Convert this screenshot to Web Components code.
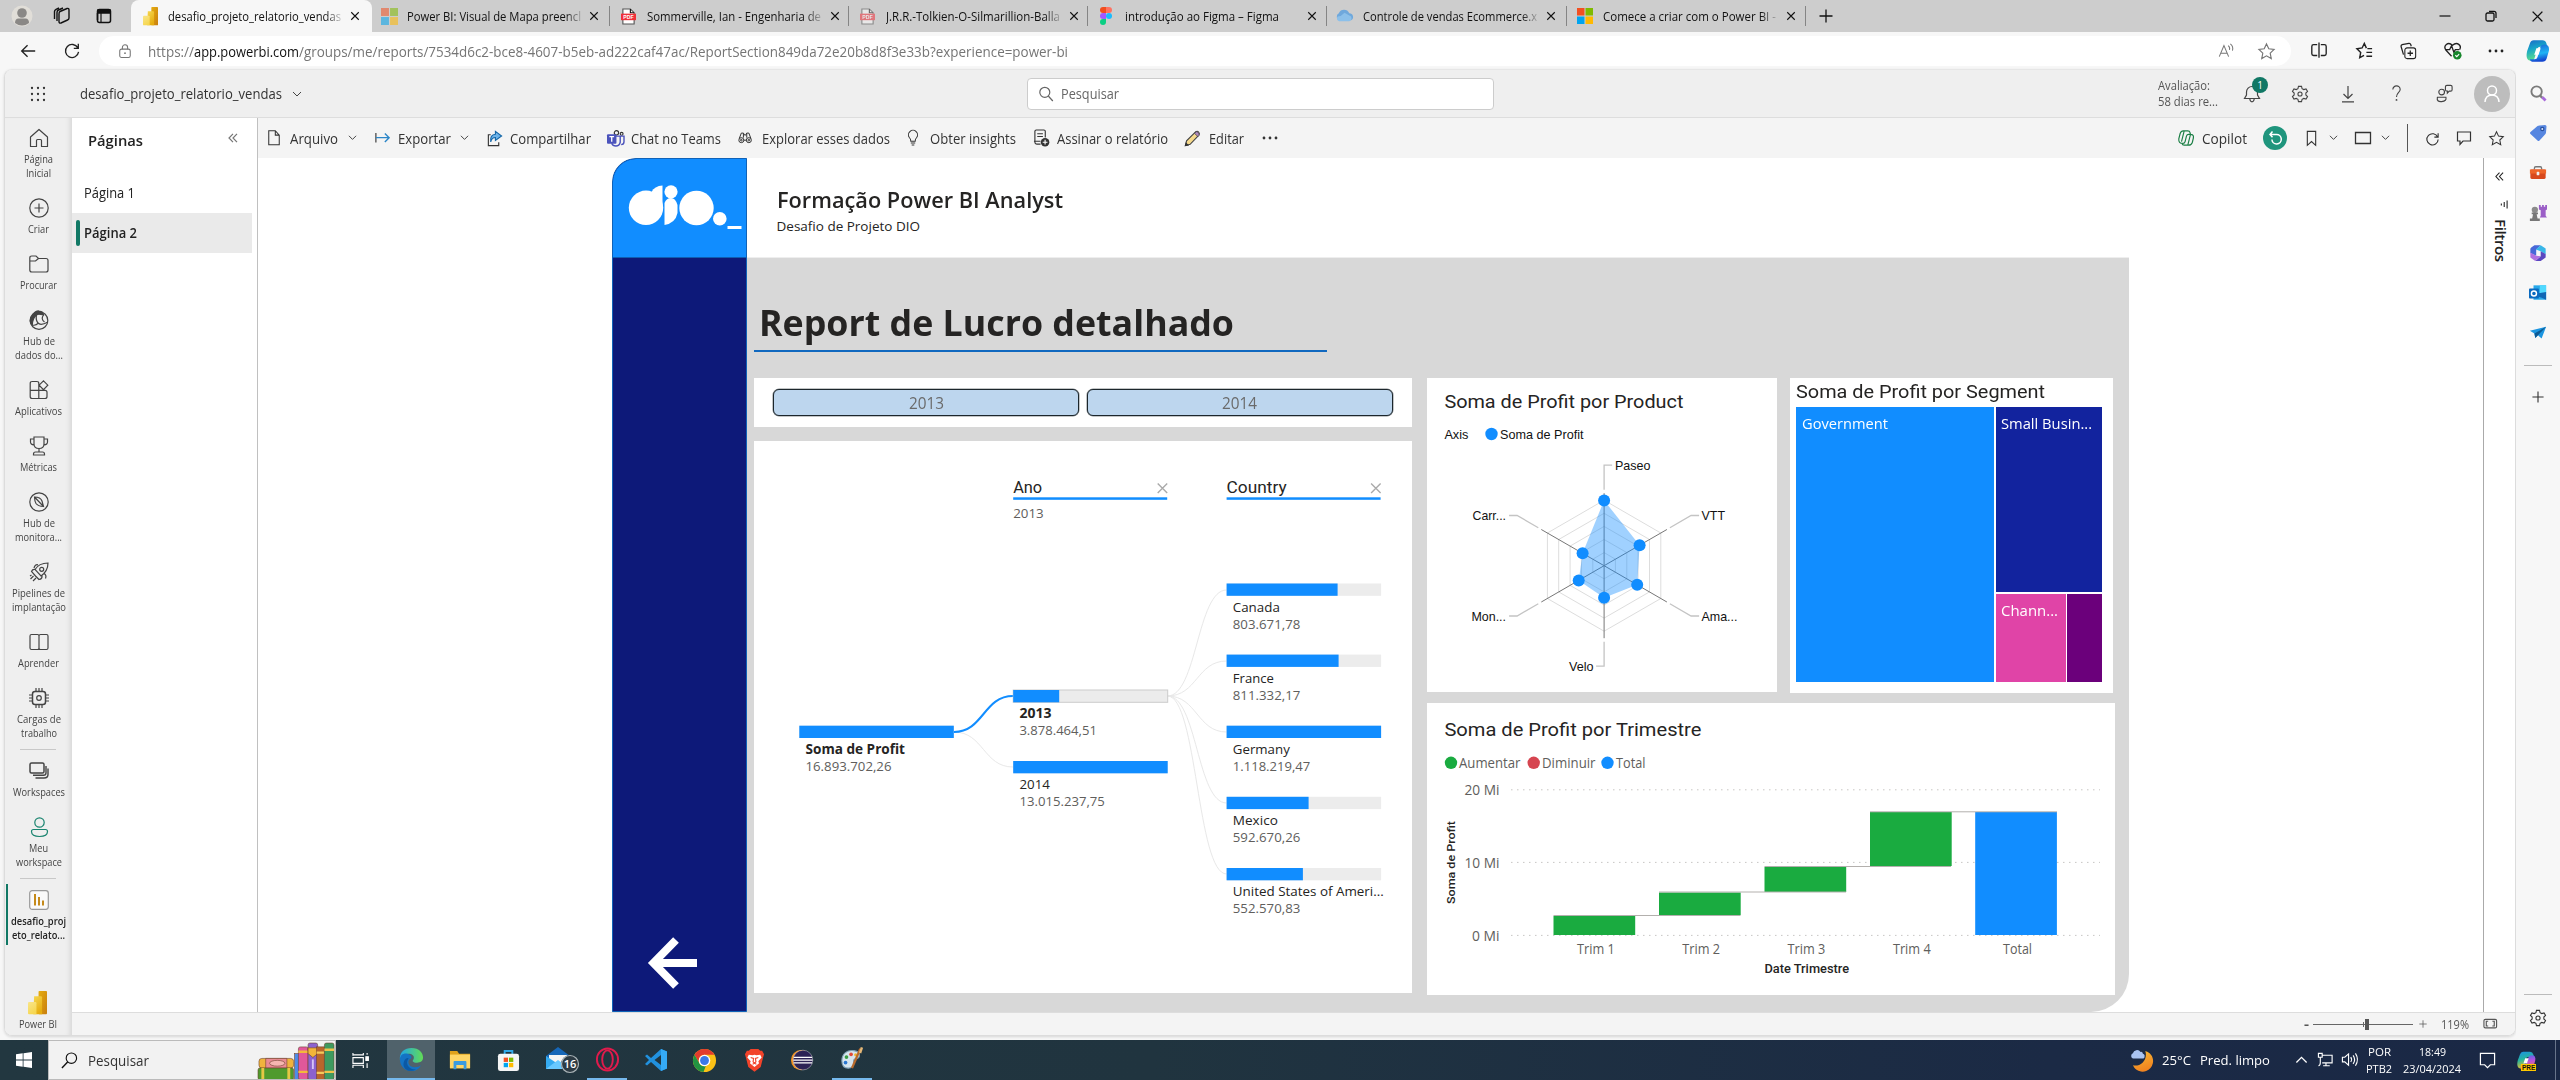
<!DOCTYPE html>
<html lang="pt-BR">
<head>
<meta charset="utf-8">
<title>desafio_projeto_relatorio_vendas</title>
<style>
html,body{margin:0;height:100%;overflow:hidden}
body{font-family:"Open Sans","Noto Sans",sans-serif;color:#333;background:#f7f7f7}
</style>
</head>
<body>
<desktop-shell></desktop-shell>
<script>
const define = (name, css, html, after) => customElements.define(name, class extends HTMLElement {
  connectedCallback() {
    if (this.shadowRoot) return;
    const root = this.attachShadow({ mode: "open" });
    root.innerHTML = `<style>*{box-sizing:border-box}:host{display:block;box-sizing:border-box}${css}</style>` + (typeof html === "function" ? html(this) : html);
    if (after) after(this, root);
  }
});

/* Icon set: [viewBox width, viewBox height, markup] */
const pdf = '<path d="M2 1h8l4 4v12H2z" fill="#fff" stroke="#555"/><path d="M10 1v4h4"/><path d="M0 6h16v7H0z" fill="#f0303a" stroke="none"/><text x="8" y="12" font-size="5.5" font-weight="700" fill="#fff" stroke="none" text-anchor="middle" font-family="Liberation Sans">PDF</text>';
const starPath = 'M10 2l2.4 5.2 5.6.7-4.1 3.9 1.1 5.6-5-2.8-5 2.8 1.1-5.6L2 7.900l5.600-.7z';
const gear = '<path d="M8.300 1.500h3.400l.6 2.500 1.900 1.100 2.500-.8 1.700 2.900-1.900 1.800v2l1.900 1.800-1.700 2.900-2.500-.8-1.900 1.100-.6 2.500H8.300L7.700 16l-1.900-1.100-2.500.8-1.700-2.900L3.500 11V9L1.600 7.200l1.700-2.900 2.500.8L7.700 4z"/><circle cx="10" cy="10" r="2.300"/>';
const copilot = '<path d="M8 2h8q3 0 3.800 3l.7 3H14q-2 0-2.600 2L9 18q-.7 3-3.500 3C1 21 1 16 2 12L4.500 5Q5.500 2 8 2z" fill="url(#cpa)" stroke="none"/><path d="M16 22H8q-3 0-3.500-2.500H9q2 0 2.600-2L14 9q.7-3 4-3 5 0 4 6l-2 7q-1 3-4 3z" fill="url(#cpb)" stroke="none"/><path d="M10.500 9.500h4l-2 6h-4z" fill="#fff" stroke="none"/>';
const I = {
  x:[12,12,'<path d="M1.500 1.500l9 9M10.500 1.500l-9 9" stroke-width="1.300"/>'],
  plus:[14,14,'<path d="M7 .5v13M.5 7h13" stroke-width="1.300"/>'],
  profile:[22,22,'<circle cx="11" cy="11" r="10.500" fill="#e1ded8" stroke="none"/><circle cx="11" cy="8" r="4.800" fill="#8a8886" stroke="none"/><path d="M4 18q0-4.500 3.500-4.500h7q3.500 0 3.500 4.500-7 5-14 0z" fill="#8a8886" stroke="none"/>'],
  spaces:[18,18,'<path d="M7 4.500l7-3q2-.5 2 1.500v8q0 1.500-1.500 2L8 16q-2 .5-2-1.500V7q0-2 1-2.500zM4 14V5.500q0-2 1.500-2.500L10 1M1.500 12V4.500Q1.500 3 3 2.300L6 1" stroke-width="1.400"/>'],
  tabs:[16,16,'<rect x="1.500" y="1.500" width="13" height="13" rx="2" stroke-width="1.500"/><path d="M2 2h12v3H2zM1.500 5v7" fill="#111" stroke-width="1.500"/><path d="M5 5v9.500"/>'],
  pbi:[18,22,'<defs><linearGradient id="pa" x2="1" y2="1"><stop stop-color="#e6ad10"/><stop offset="1" stop-color="#c87e0e"/></linearGradient><linearGradient id="pb" x2=".5" y2="1"><stop stop-color="#f6d751"/><stop offset="1" stop-color="#e6ad10"/></linearGradient><linearGradient id="pc" x2=".5" y2="1"><stop stop-color="#f9e589"/><stop offset="1" stop-color="#f6d751"/></linearGradient></defs><g stroke="none"><rect x="10" width="8" height="22" rx=".8" fill="url(#pa)"/><path d="M5.800 5h6.500q1 0 1 1v16H5z" fill="url(#pb)"/><path d="M1 10.500h6q1 0 1 1V22H1q-1 0-1-1v-9.500q0-1 1-1z" fill="url(#pc)"/></g>'],
  ms:[16,16,'<g stroke="none"><path fill="#f25022" d="M0 0h7.500v7.500H0z"/><path fill="#7fba00" d="M8.500 0H16v7.500H8.500z"/><path fill="#00a4ef" d="M0 8.500h7.500V16H0z"/><path fill="#ffb900" d="M8.500 8.500H16V16H8.500z"/></g>'],
  pdf:[16,18,pdf],
  figma:[12,18,'<g stroke="none"><path fill="#f24e1e" d="M3 0h3v6H3a3 3 0 010-6z"/><path fill="#ff7262" d="M6 0h3a3 3 0 010 6H6z"/><path fill="#a259ff" d="M3 6h3v6H3a3 3 0 010-6z"/><circle cx="9" cy="9" r="3" fill="#1abcfe"/><path fill="#0acf83" d="M3 12h3v3a3 3 0 11-3-3z"/></g>'],
  cloud:[18,14,'<g stroke="none"><path fill="#6fa8dc" d="M4 12a4 4 0 01-1-7.500A6 6 0 0114 4.500 4 4 0 0116 12z"/><path fill="#8cc0ea" d="M5 13q-4 0-4-3 0-2.500 4-2.500L9 4l7 4q1.500 4-2 5z"/></g>'],
  min:[14,14,'<path d="M1.500 7h11"/>'],
  max:[14,14,'<rect x="2" y="4" width="8" height="8" rx="1.500" stroke-width="1.300"/><path d="M5 2.300h5q2 0 2 2V9" stroke-width="1.300"/>'],
  back:[20,20,'<path d="M18 10H3M9.500 3.500L3 10l6.500 6.500" stroke-width="1.500"/>'],
  reload:[20,20,'<path d="M16.500 6.500A7.300 7.300 0 1017.300 11M17 2v5h-5" stroke-width="1.500"/>'],
  lock:[16,18,'<rect x="2" y="7" width="12" height="9.500" rx="2"/><path d="M5 7V5a3 3 0 016 0v2"/><circle cx="8" cy="11.700" r="1" fill="currentColor" stroke="none"/>'],
  read:[20,18,'<path d="M1.500 16L7 3l5.500 13M3.500 12h7M12 3q2.500 2 1.500 5M14.500 1q4 3 2.500 8" />'],
  star:[20,20,`<path d="${starPath}"/>`],
  split:[20,18,'<path d="M8 3H4Q2 3 2 5v8q0 2 2 2h4M12 3h4q2 0 2 2v8q0 2-2 2h-4M10 .5v17" stroke-width="1.500"/>'],
  favs:[20,20,'<path d="M12 7.500L9.800 2.500 7.500 7.300l-5.500.8 4 4-1 5.500 4.500-2.400M13 8h5M12 12h6M12 16h6" stroke-width="1.500"/>'],
  coll:[20,20,'<rect x="6.500" y="6.500" width="12" height="12" rx="2.500"/><path d="M12.500 9.500v6M9.500 12.500h6M5 14L2.300 5Q2 3.500 3.500 3L11 1.500q1.500-.3 2 1.200l.6 2" stroke-width="1.400"/>'],
  heart:[20,20,'<path d="M9 16L3 9.500C0 5.500 5 0 10 4.500 15 0 20 5 17.500 9M2.500 9H7l2-4 2.500 7 1.500-3h4" stroke-width="1.400"/><circle cx="15" cy="15" r="4.500" fill="#16862b" stroke="none"/><path d="M13 15l1.500 1.500L17 13.800" stroke="#fff"/>'],
  dots:[18,6,'<g fill="currentColor" stroke="none"><circle cx="3" cy="3" r="1.400"/><circle cx="9" cy="3" r="1.400"/><circle cx="15" cy="3" r="1.400"/></g>'],
  copilot:[24,24,'<defs><linearGradient id="cpa" x2=".3" y2="1"><stop stop-color="#1b68c8"/><stop offset=".45" stop-color="#17a5c8"/><stop offset="1" stop-color="#5fe08a"/></linearGradient><linearGradient id="cpb" x2=".2" y2="1"><stop stop-color="#1b5fd0"/><stop offset=".6" stop-color="#1fb5f5"/><stop offset="1" stop-color="#1447d0"/></linearGradient></defs>'+copilot],
  copilotP:[24,24,'<defs><linearGradient id="cpa" x2=".3" y2="1"><stop stop-color="#1b8fe8"/><stop offset=".5" stop-color="#25b5a0"/><stop offset="1" stop-color="#e8c12c"/></linearGradient><linearGradient id="cpb" x2=".2" y2="1"><stop stop-color="#3f6ce8"/><stop offset=".5" stop-color="#b853dd"/><stop offset="1" stop-color="#f07a62"/></linearGradient></defs>'+copilot],
  copilotG:[20,20,'<path d="M7 2h5q2 0 2.500 2l.5 2h-2Q11 6 10.500 8L9 14q-.5 2-2.500 2Q1.500 16 2 11l1.500-6Q4.500 2 7 2zM13 18H8q-2 0-2.500-2M13 18q3 0 4-3l1.200-5Q19 6 15 6M8 2L5 14M12 18l3-12" stroke="#1b7f45" stroke-width="1.300"/>'],
  waffle:[16,16,'<g fill="#333" stroke="none">'+[2,8,14].map(y=>[2,8,14].map(x=>`<circle cx="${x}" cy="${y}" r="1.150"/>`).join("")).join("")+'</g>'],
  chev:[10,8,'<path d="M1 2l4 4 4-4" stroke-width="1"/>'],
  search:[16,16,'<circle cx="6.800" cy="6.300" r="5"/><path d="M10.300 10l4.500 5"/>'],
  bell:[20,20,'<path d="M2.500 14.500h15L15.500 11V8a5.500 5.500 0 00-11 0v3zM7.800 15q.5 2.800 2.200 2.800t2.200-2.800"/>'],
  gear:[20,20,gear],
  down:[16,18,'<path d="M8 1v12.500M3.500 9L8 13.500 12.500 9M2 16.800h12"/>'],
  help:[12,18,'<path d="M2 5a4 4 0 018 0c0 3-4 3.500-4 8"/><circle cx="6" cy="16.300" r="1" fill="currentColor" stroke="none"/>'],
  people:[20,20,'<circle cx="7" cy="8.500" r="3"/><path d="M2.500 14h9q1 4-4.500 4.500T2.500 14zM11 3q0-1.500 1.500-1.500h4Q18 1.500 18 3v3q0 1.500-1.500 1.500H15l-2 2v-2q-2 0-2-1.500z"/>'],
  avatar:[36,36,'<circle cx="18" cy="18" r="18" fill="#bdbdbd" stroke="none"/><g stroke="#fff" stroke-width="1.500"><circle cx="18" cy="14.500" r="4.500"/><path d="M11 26q.5-7 7-7t7 7"/></g>'],
  file:[16,20,'<path d="M2 2h7.500l4.500 5v11H2zM9.500 2v5H14"/>'],
  exp:[18,12,'<path d="M2 1v10"/><path d="M2 6h14M11.500 1.500L16 6l-4.500 4.500" stroke="#2c86c8" stroke-width="1.500"/>'],
  share:[18,18,'<path d="M5 5H2.500v11.500h11V13"/><path d="M10 1.500l6.500 4.800L10 11V8q-4 0-5 4.500Q4 5 10 4.500z" fill="#6cb2e8" stroke="#1567a8"/>'],
  teams:[18,18,'<circle cx="10" cy="3" r="2.300"/><circle cx="15.500" cy="4" r="1.500" /><path d="M9 6.500h9v6q0 3-3 3M5 14q1 3 4.500 3t4.500-4V6.500" stroke="#4b53bc" stroke-width="1.500"/><rect y="4.500" width="10" height="10" rx="1" fill="#4b53bc" stroke="none"/><path d="M2.500 7h5M5 7v5.500" stroke="#fff" stroke-width="1.400"/>'],
  bino:[18,16,'<circle cx="4" cy="11" r="3"/><circle cx="13" cy="11" r="3"/><circle cx="4" cy="11" r="1"/><circle cx="13" cy="11" r="1"/><path d="M1.500 9L4 2.500h2.500L8 5h1l1.500-2.500H13L15.500 9M7 11h3M6.500 3v5M10.500 3v5"/>'],
  bulb:[16,20,'<path d="M5.500 14q0-2.500-1.500-4a5.200 5.200 0 118 0q-1.500 1.500-1.500 4zM5.500 16h5M6.500 18.300h3"/>'],
  subs:[18,20,'<path d="M13 9V2.500Q13 1 11.500 1h-8Q2 1 2 2.500V14q0 2 2 2h4M4.500 5h6M4.500 8h6M1 13h7"/><circle cx="12.800" cy="14" r="4.500" fill="#333" stroke="none"/><path d="M12.800 11.500v5M10.300 14h5" stroke="#fff"/>'],
  pencil:[18,18,'<path d="M1.500 16.500l1.200-5L12 2.200q2-1.500 3.500 0t0 3.500L6.500 15.200z" fill="#f6d98b" stroke="#444"/><path d="M11 3.500l3.800 3.500L16 5.500q.8-3-2.500-3.800z" fill="#b08ac0" stroke="#444" stroke-width=".8"/><path d="M1.500 16.500l.7-2.500 2 2z" fill="#444"/>'],
  undo:[24,24,'<circle cx="12" cy="12" r="12" fill="#1f957d" stroke="none"/><path d="M7.500 8.500h6a4.700 4.700 0 11-4.600 5M9.500 5.500l-2.500 3 2.500 2.800" stroke="#fff" stroke-width="1.500"/>'],
  mark:[14,18,'<path d="M2.500 1.500h9v15L7 12.500l-4.500 4z"/>'],
  rect:[18,14,'<path d="M1.500 1.500h15v11h-15z" stroke-width="1.300"/>'],
  refresh:[16,16,'<path d="M13.500 6.500A6 6 0 1014 9M14 2.500v4h-4"/>'],
  comment:[16,16,'<path d="M1.500 2h13v9H7l-3 3.500V11H1.500z"/>'],
  dbl:[10,10,'<path d="M5 .8L1 5l4 4.200M9 .8L5 5l4 4.200"/>'],
  filter:[10,10,'<path d="M9 .5v9M5.800 2.200v5.600M2.600 3.800v2.400" stroke-width="1.200"/>'],
  home:[20,20,'<path d="M1.500 9L10 1.500 18.500 9v9.500H12.500v-6q0-1-1-1h-3q-1 0-1 1v6H1.500z" stroke-linejoin="round"/>'],
  create:[20,20,'<circle cx="10" cy="10" r="9.200"/><path d="M10 5.500v9M5.500 10h9"/>'],
  folder:[20,20,'<path d="M.8 4q0-2 2-2H7l2.500 2.500H17q2 0 2 2V16q0 2-2 2H2.800q-2 0-2-2zM.8 7H6.500L9.500 4.500"/>'],
  hub:[20,20,'<circle cx="10" cy="10.500" r="8.800"/><path d="M2 8Q6 0 10 1q4 .3 4.500 4Q9 3.500 7.500 5q-4 3-4.200 10Q0 12 2 8z" fill="#444"/><path d="M7.500 5q-1 5 1.500 8t10-1M14.500 5q-3 4 1 7M3.500 15q3 1 6-2"/>'],
  apps:[20,20,'<path d="M9.800 10.300V3.500q0-2-2-2H3.200q-2 0-2 2v13q0 2 2 2H16q2 0 2-2v-4.200q0-2-2-2H1.200M9.800 10.300v8.200M14.500.8l4.300 4.400-4.300 4.400-4.400-4.400z"/>'],
  trophy:[20,20,'<path d="M5 1h10v7q0 4.500-5 4.500T5 8zM5 3H1.500v3q0 2.500 3.500 3M15 3h3.500v3q0 2.500-3.500 3M10 12.500V16M4.500 19v-1q0-2 2-2h7q2 0 2 2v1z"/>'],
  compass:[20,20,'<circle cx="10" cy="10" r="9.200"/><path d="M5.500 5q6 0 7.500 4 .5 2 1.500 5.500-5.500-.3-7.500-3Q5.700 9.500 5.500 5zM5.500 5l9 9.500"/>'],
  rocket:[20,20,'<path d="M6 7.500Q10 1 19 1q0 8-7 13zM6 7.500q-2.500-.5-3.500 2l4 4.500 3.500 3.500q3.500-.5 3-4M5 6q1-4 4-3.200M14.500 11q3.500 2 2 5.500"/><circle cx="12.700" cy="7.300" r="2"/><path d="M4.500 14l-3 3M7 16l-3 3M1 14l1.500-1"/>'],
  book:[20,20,'<path d="M10 2.500v15M10 4q0-1.500-1.500-1.500h-6q-1.500 0-1.500 1.500v12q0 1.500 1.500 1.500h6Q10 17.500 10 16q0 1.500 1.500 1.500h6Q19 17.500 19 16V4q0-1.500-1.500-1.500h-6Q10 2.500 10 4z"/>'],
  chip:[20,20,'<rect x="3.500" y="3.500" width="13" height="13" rx="2.500" stroke-width="1.500"/><circle cx="10" cy="10" r="2.300"/><path d="M7 3.500V0M10 3.500V0M13 3.500V0M7 20v-3.500M10 20v-3.500M13 20v-3.500M3.500 7H0M3.500 10H0M3.500 13H0M20 7h-3.500M20 10h-3.500M20 13h-3.500"/>'],
  work:[20,20,'<rect x="1" y="2" width="14" height="10" rx="1.500" stroke-width="1.500"/><path d="M17 5v7q0 2.300-2.500 2.300H4M19 7.500v6q0 3.500-4 3.500H6.500" stroke-width="1.400"/>'],
  me:[20,20,'<g stroke="#19846f"><circle cx="10.500" cy="5.500" r="4.700"/><path d="M2.500 14.500q0-2 2-2h12q2 0 2 2 0 5-8 5t-8-5z"/></g>'],
  report:[20,20,'<rect x=".7" y=".7" width="18.600" height="18.600" rx="2.500" fill="#fafafa" stroke="#999"/><path d="M6 4v11.500M10 7v8.500M14 10.500v5" stroke="#c58a1a" stroke-width="2"/>'],
  fit:[16,12,'<rect x="1" y="1.500" width="13.500" height="9" rx="1.500"/><path d="M5.500 3.500h-2v5h2M10 3.500h2v5h-2"/>'],
  sSearch:[18,18,'<circle cx="7" cy="7" r="5.500" stroke="#7b7b7b" stroke-width="2"/><path d="M11 11.500l2 2" stroke="#7b7b7b" stroke-width="2.500"/><path d="M13 13l3.500 3.500" stroke="#a86bdb" stroke-width="3"/>'],
  sTag:[18,18,'<path d="M10.500 1.500L16 1q1.500 0 1.500 1.500L17 8.500q0 1-1 2l-5.500 6q-1 1-2 0L1.500 10q-1-1 0-2l7-6q.8-.5 2-.5z" fill="#5686e0" stroke="none"/><circle cx="13.300" cy="5" r="1.600" fill="#d8e6ff" stroke="#28509f"/>'],
  sBox:[20,18,'<path d="M6 5V3.500Q6 2 7.500 2h5Q14 2 14 3.500V5" stroke="#777" stroke-width="1.500"/><rect x="1.500" y="5" width="17" height="10.500" rx="1.500" fill="#d8481c" stroke="none"/><path d="M1 5h18v4.500H1z" fill="#ee6428" stroke="none"/><rect x="8.500" y="7.500" width="3" height="4" rx="1" fill="#eee" stroke="none"/>'],
  sChess:[20,20,'<path d="M11 1h2v2h1.500V1h2v2H18V1h2v5l-1.500 1v6l1.500 2h-8l1-2V7l-2-1z" fill="#9b5fc7" stroke="none"/><circle cx="6.500" cy="6.500" r="3.500" fill="#8b8b8b" stroke="none"/><path d="M3 9.500h7v2H8.500l1 4.500h2.500v3H1v-3h2.500l1-4.500H3z" fill="#777" stroke="none"/>'],
  sOffice:[20,20,'<path d="M6 1.500h7L8 6v7l-6.500-3V5.500q0-1 1-1.600z" fill="#4868d8" stroke="none"/><path d="M13 1.500l5.500 3.500v6.500L13 8 7.500 6z" fill="#38b6e8" stroke="none"/><path d="M18.500 11v4L13 19H7l6-5.500V8z" fill="#5a48c0" stroke="none"/><path d="M1.500 9.500v5.500L7 19l6-5.500-5-.5z" fill="#b070e0" stroke="none"/>'],
  sOutlook:[20,20,'<g stroke="none"><path d="M5 1.500h14v16H5z" fill="#28a8ea"/><path d="M12 1.500h7v8l-7 4z" fill="#50d9ff"/><path d="M4 11l15 6.500V9z" fill="#1066b5"/><rect y="5" width="11" height="11" rx="1" fill="#0a6ac0"/></g><circle cx="5.500" cy="10.500" r="2.800" stroke="#fff" stroke-width="1.600"/>'],
  sSend:[20,18,'<path d="M1 6.500L19 2l-5 13-4-3.500-3 3-1-5z" fill="#1b95e0" stroke="none"/><path d="M19 2L6 9.500l1 5 3-3z" fill="#0d5a94" stroke="none"/>'],
  win:[16,16,'<path d="M0 2.200L6.700 1.300V7.600H0zM7.500 1.200L16 0v7.600H7.500zM0 8.400h6.700v6.300L0 13.800zM7.500 8.400H16V16l-8.500-1.200z" fill="#fff" stroke="none"/>'],
  tSearch:[18,18,'<circle cx="11" cy="6.500" r="5.500"/><path d="M7 10.500L1 17" stroke-width="1.500"/>'],
  tView:[18,18,'<g stroke="#fff"><path d="M1 4V1M1 1v2h11V1M1 17v-3h11v3M1 6h11v6H1zM16 1v2M16 12v5"/><path d="M14.700 5h2.600v4h-2.600z" fill="#fff"/></g>'],
  edge:[26,26,'<defs><linearGradient id="ea" x2="1"><stop stop-color="#1fa5e8"/><stop offset="1" stop-color="#62dc55"/></linearGradient></defs><g stroke="none"><path d="M1 14C0 5 6 1 13 1c8 0 12 5 12 10 0 5-5 6-9 5q-3-1-1-3c2-4-2-6-5-6-5 0-9 3-9 7z" fill="url(#ea)"/><path d="M1 13c0-5 4-7 8-6 3 1 5 3 3.500 5C8 13 9 21 16 21q5 0 7-2-4 6.500-10 6C6 25 1 20 1 13z" fill="#1473c4"/><path d="M10 12c-4 5 0 12 8 11.500-9 4-15-2-13-8 1-3 4-5 5-3.500z" fill="#0c59a4"/></g>'],
  explorer:[24,22,'<g stroke="none"><path d="M1 1h8l2 3h12v16H1z" fill="#e0a11b"/><path d="M1 5h22v15H1z" fill="#ffd566"/><path d="M5 21v-8q0-1 1-1h12q1 0 1 1v8h-3v-4.500H8V21z" fill="#3a9be0"/></g>'],
  store:[24,24,'<path d="M8 6V2h8v4" stroke="#31a8e8" stroke-width="2"/><rect x="1" y="5" width="22" height="18" rx="2.500" fill="#f5f5f5" stroke="none"/><g stroke="none"><path fill="#f25022" d="M7 9h4.500v4.500H7z"/><path fill="#7fba00" d="M12.500 9H17v4.500h-4.500z"/><path fill="#00a4ef" d="M7 14.500h4.500V19H7z"/><path fill="#ffb900" d="M12.500 14.500H17V19h-4.500z"/></g>'],
  mail:[34,28,'<g stroke="none"><path d="M1 10L13 1l12 9v13H1z" fill="#1667b8"/><path d="M4 9h18v8H4z" fill="#f4f4f4"/><path d="M1 10l12 8 12-8v13H1z" fill="#35aaf0"/><path d="M1 23L13 14l12 9z" fill="#68c8ff"/><circle cx="25" cy="18" r="9" fill="#2d3b44"/></g><circle cx="25" cy="18" r="8.500" stroke="#aab4b8"/><text x="25" y="22" text-anchor="middle" fill="#fff" stroke="none" font-size="11" font-weight="600" font-family="Open Sans">16</text>'],
  opera:[26,26,'<ellipse cx="13" cy="13" rx="11" ry="11.500" stroke="#e01b4c" stroke-width="2"/><ellipse cx="13" cy="13" rx="5.500" ry="9.500" stroke="#e01b4c" stroke-width="2"/>'],
  vscode:[24,24,'<path d="M17 1l6 2.500v17L17 23 7 14l-4 3.500L1 16l4-4-4-4 2-1.500L7 10zM17 7l-6.500 5 6.500 5z" fill="#2191de" stroke="none" fill-rule="evenodd"/><path d="M17 1l6 2.500v17L17 23z" fill="#35aaf5" stroke="none"/>'],
  chrome:[26,26,'<g stroke="none"><circle cx="13" cy="13" r="12" fill="#fbc116"/><path d="M13 1a12 12 0 0110.400 6H13a6 6 0 00-5.200 9L2.600 7A12 12 0 0113 1z" fill="#e33b2e"/><path d="M2.600 7l5.200 9a6 6 0 006.500 2.800L12 25A12 12 0 012.600 7z" fill="#229342"/><circle cx="13" cy="13" r="6" fill="#fff"/><circle cx="13" cy="13" r="4.600" fill="#3b78e7"/></g>'],
  brave:[22,26,'<path d="M5 3l2-2h8l2 2h2l2 3.500-1 3.500-2.500 10L11 25 4.500 20 2 10 1 6.500 3 3z" fill="#f2432a" stroke="none"/><path d="M5 7l4 .5L11 7l2 .5L17 7l1.500 3-3.500 4 .8 2L11 20l-4.800-4 .8-2-3.500-4z" fill="#fff" stroke="none"/><path d="M7 10l3 1-.5 3.500L11 16l1.500-1.500L12 11l3-1M9 17l2-1 2 1" stroke="#f2432a"/>'],
  eclipse:[26,24,'<circle cx="12" cy="12" r="11" fill="#f29222" stroke="none"/><circle cx="14" cy="12" r="10.700" fill="#2c2255" stroke="#fff" stroke-width=".4"/><path d="M4 9h20M3.500 12h21M4 15h20" stroke="#fff" stroke-width="1.400"/>'],
  paint:[26,28,'<path d="M2 16C2 8 8 4 15 5q7 1 6 6-1 3-4 3t-2 4q0 6-6 6-7 0-7-8z" fill="#d7e5ee" stroke="#7fa0b5"/><g stroke="none"><circle cx="7" cy="12" r="2" fill="#3a9c45"/><circle cx="12" cy="9" r="2" fill="#e04b3a"/><circle cx="17" cy="9.500" r="1.700" fill="#f0b62c"/><circle cx="6" cy="18" r="2" fill="#2a76d0"/></g><path d="M22 3L13 24" stroke="#b86a2c" stroke-width="2.500"/><path d="M20.500 7L22.500 1l2.500 1-2 6z" fill="#e5b877" stroke="none"/>'],
  moon:[24,24,'<defs><linearGradient id="mo" x2=".3" y2="1"><stop stop-color="#f7b935"/><stop offset="1" stop-color="#f08420"/></linearGradient></defs><path d="M16 2a11 11 0 11-13 15C10 19 19 12 16 2z" fill="url(#mo)" stroke="none"/><path d="M3 10a3 3 0 010-5.500A4.500 4.500 0 0111 3q2-.5 2.500 2 2.500.5 1.500 4-1 1-2 1z" fill="#a9c3f2" stroke="none"/>'],
  caret:[14,8,'<path d="M1.500 7L7 1.500 12.500 7" stroke-width="1.400"/>'],
  net:[18,16,'<path d="M5 3.500h11v8H5.500M9.500 12v2.500M6.500 14.500h7M1.500 1.500h4v4h-4zM3.500 5.500v6q0 3-2 3"/>'],
  vol:[18,16,'<path d="M1.500 5.500H4L8 2v12l-4-3.500H1.500zM10.300 5.500q1.800 2.500 0 5M12.800 3.500q3.200 4.500 0 9M15.300 1.500q4.200 6.500 0 13"/>'],
  note:[18,18,'<path d="M1.500 1.500h15v12H12L9 16.500l-3-3H1.500z" stroke-width="1.300"/>'],
  books:[80,34,'<g stroke="#6b3f2a" stroke-width=".6"><rect x="1" y="15" width="36" height="10" rx="3" fill="#efb33d"/><path d="M8 15h22v10H8z" fill="#e98b93"/><ellipse cx="20" cy="20" rx="8" ry="3" fill="#f6b6b0"/><rect y="25" width="37" height="12" rx="2" fill="#4f9a2d"/><path d="M5 25v12M32 25v12" stroke="#e4c745" stroke-width="3"/><rect x="38" y="10" width="5" height="28" fill="#4d8de8"/><rect x="42" y="3" width="10" height="34" rx="2" fill="#e0589a"/><path d="M42 8h10M42 29h10" stroke="#f3b83c" stroke-width="2.500"/><rect x="52" y="-1" width="10" height="38" rx="2" fill="#8b62cf"/><path d="M52 4h10v6l-5 4-5-4z" fill="#f2b43a"/><path d="M57 16v10" stroke="#d6c3f5" stroke-width="2"/><rect x="61" y="3" width="8" height="34" fill="#b9662b"/><path d="M61 9h8M61 30h8" stroke="#f4c95a" stroke-width="2.500"/><rect x="69" y="-1" width="10" height="38" rx="2" fill="#3e9a5f"/><path d="M69 6h10M69 29h10" stroke="#f0c34a" stroke-width="2.500"/></g>']
};
define("ui-icon", ":host{display:inline-flex;flex:none}svg{display:block;overflow:visible}", el => {
  const [w, h, m] = I[el.getAttribute("n")];
  const W = +(el.getAttribute("w") || w);
  return `<svg width="${W}" height="${W * h / w}" viewBox="0 0 ${w} ${h}" fill="none" stroke="currentColor" stroke-width="1.200">${m}</svg>`;
});

/* A run of text that occupies an exact width */
define("fit-text", ":host{display:inline-block;white-space:nowrap;flex:none}span{display:inline-block;transform-origin:0 50%}", "<span><slot></slot></span>", (el, root) => {
  const s = root.querySelector("span"), w = +el.getAttribute("w");
  const n = s.getBoundingClientRect().width;
  if (n && w) { s.style.transform = `scaleX(${w / n})`; s.style.width = n + "px"; el.style.width = w + "px"; s.style.marginRight = (w - n) + "px"; }
});

const ic = (n, w) => `<ui-icon n="${n}"${w ? ` w="${w}"` : ""}></ui-icon>`;
const tx = (t, w, st = "") => `<fit-text w="${w}" style="${st}">${t}</fit-text>`;
/* Lays cells along a line; each entry is [left edge, width, content, style] */
const line = (start, cells) => {
  let end = start;
  return cells.map(([x, w, c, st = ""]) => {
    const m = x - end; end = x + w;
    return `<div class="c" style="margin-left:${m}px;width:${w}px;${st}">${c}</div>`;
  }).join("");
};
const icell = (cx, n, w, st) => { const W = w || I[n][0]; return [cx - W / 2, W, ic(n, w), st]; };
const lineCss = ":host{display:flex;align-items:center;flex:none}.c{flex:none;display:flex;align-items:center;height:100%}";

define("tab-strip", lineCss + `:host{height:32px;background:#cdcdcd;color:#111;font-size:12.500px}
.tab{flex:none;height:32px;display:flex;align-items:center;position:relative}
.t{overflow:hidden;-webkit-mask:linear-gradient(90deg,#000 91%,#0003);mask:linear-gradient(90deg,#000 91%,#0003)}
.act{background:#f7f7f7;border-radius:8px 8px 0 0}.tab.sep{border-right:1px solid #858585;height:20px}`, () => {
  const tab = (w, cls, lead, icon, iw, gap, t, tw, xgap, fade = true, dim = "") => `<div class="tab ${cls}" style="width:${w}px;padding-left:${lead}px"><span style="display:flex;${dim}">${ic(icon, iw)}</span><span class="${fade ? "t" : ""}" style="margin-left:${gap}px;display:flex">${tx(t, tw)}</span><span style="margin-left:${xgap}px;display:flex">${ic("x", 10)}</span></div>`;
  return line(0, [icell(22, "profile"), icell(62, "spaces"), icell(104, "tabs")]) + `<div style="width:19px"></div>` +
    tab(241, "act", 12, "pbi", 15, 10, "desafio_projeto_relatorio_vendas", 173, 9) +
    tab(238, "sep", 9, "ms", 17, 9, "Power BI: Visual de Mapa preencl", 174, 8, true, "opacity:.55") +
    tab(239, "sep", 11, "pdf", 15, 11, "Sommerville, Ian - Engenharia de", 174, 9) +
    tab(239, "sep", 11, "pdf", 15, 11, "J.R.R.-Tolkien-O-Silmarillion-Balla", 174, 9, true, "opacity:.55") +
    tab(239, "sep", 12, "figma", 12, 13, "introdução ao Figma – Figma", 154, 28, false) +
    tab(240, "sep", 9, "cloud", 17, 10, "Controle de vendas Ecommerce.x", 174, 9) +
    tab(239, "sep", 10, "ms", 16, 10, "Comece a criar com o Power BI -", 173, 10) +
    line(1806, [icell(1826, "plus"), icell(2445, "min"), icell(2491, "max"), icell(2537, "x", 13)]);
});

define("address-bar", lineCss + `:host{height:37px;background:#f7f7f7;color:#222}
.pill{margin-left:18px;width:2192px;height:30px;margin-top:1px;border-radius:15px;background:#fff;display:flex;align-items:center;font-size:14.500px;color:#757575;flex:none}`, () =>
  line(0, [icell(28, "back", 18), icell(72, "reload", 18)]) +
  `<div class="pill">${line(100, [icell(126, "lock", 14), [149, 46, tx("https://", 46)], [195, 105, tx("app.powerbi.com", 105, "color:#111")], [300, 769, tx("/groups/me/reports/7534d6c2-bce8-4607-b5eb-ad222caf47ac/ReportSection849da72e20b8d8f3e33b?experience=power-bi", 769)], icell(2227, "read", 17), icell(2267, "star", 19)])}</div>` +
  line(2291, [icell(2319, "split", 18), icell(2364, "favs", 19), icell(2408, "coll", 18), icell(2452, "heart", 19), icell(2496, "dots"), icell(2538, "copilot", 26)]));

define("app-header", lineCss + `:host{height:48px;background:#efefef;border-bottom:1px solid #ddd;color:#444;font-size:14px}
.bell{position:relative;display:flex}.badge{position:absolute;left:10px;top:-7px;width:16px;height:16px;border-radius:8px;background:#117865;color:#fff;font-size:10px;display:flex;align-items:center;justify-content:center}
.box{width:467px;height:32px;background:#fff;border:1px solid #ccc;border-radius:4px;display:flex;align-items:center;gap:7px;padding-left:10px;color:#666}
.av{font-size:12px;line-height:16px;color:#555;display:flex;flex-direction:column}`, () =>
  line(5, [icell(38, "waffle"), [80, 202, tx("desafio_projeto_relatorio_vendas", 202, "color:#333")], icell(297, "chev"),
    [1027, 467, `<div class="box">${ic("search")}${tx("Pesquisar", 58)}</div>`],
    [2158, 62, `<div class="av">${tx("Avaliação:", 52)}${tx("58 dias re...", 60)}</div>`],
    [2242, 20, `<div class="bell">${ic("bell")}<span class="badge">1</span></div>`],
    icell(2300, "gear", 18), icell(2348, "down"), icell(2396, "help", 11), icell(2444, "people", 19), icell(2492, "avatar")]));

define("side-item", `:host{height:auto;text-align:center}
.i{display:flex;flex-direction:column;align-items:center;padding:10px 3px 8px 0;border-left:2px solid transparent;margin-left:1px}
.i.on{border-color:#117865;font-weight:600;color:#222;padding:6px 3px 3px 0;margin-top:4px;margin-bottom:1px}
.l{height:14px;line-height:14px;font-size:10.500px;display:block}ui-icon{margin-bottom:4px;height:20px;align-items:center}`, el => {
  const L = el.getAttribute("t").split("|"), W = el.getAttribute("ws").split("|");
  return `<div class="i ${el.hasAttribute("on") ? "on" : ""}">${ic(el.getAttribute("i"))}${L.map((t, k) => `<div class="l">${tx(t, W[k])}</div>`).join("")}</div>`;
});
define("side-nav", `:host{width:67px;background:#efefef;color:#444;display:flex;flex-direction:column;box-shadow:inset -6px 0 6px -5px #0002}hr{border:0;height:1px;background:#c8c8c8;width:36px;margin:1px 0 1px 15px}.sp{flex:1}.pb{display:flex;flex-direction:column;align-items:center;gap:3px;padding:0 2px 4px 0;font-size:10.500px;line-height:14px}`, () => {
  const it = (i, t, ws, on = "") => `<side-item i="${i}" t="${t}" ws="${ws}" ${on}></side-item>`;
  return it("home", "Página|Inicial", "29|25") + it("create", "Criar", "21") + it("folder", "Procurar", "37") + it("hub", "Hub de|dados do...", "32|48") + it("apps", "Aplicativos", "47") + it("trophy", "Métricas", "37") + it("compass", "Hub de|monitora...", "32|47") + it("rocket", "Pipelines de|implantação", "53|54") + it("book", "Aprender", "41") + it("chip", "Cargas de|trabalho", "44|36") + "<hr>" + it("work", "Workspaces", "52") + it("me", "Meu|workspace", "19|46") + "<hr>" + it("report", "desafio_proj|eto_relato...", "55|53", "on") + `<div class="sp"></div><div class="pb">${ic("pbi", 19)}${tx("Power BI", 38)}</div>`;
});

define("pages-pane", `:host{width:186px;flex:none;background:#fff;border-right:1px solid #c0c0c0;color:#222;font-size:14px}
.h{height:55px;display:flex;justify-content:space-between;padding:12px 19px 0 16px;font-size:15px;font-weight:600}.h ui-icon{margin-top:3px;color:#777}
.p{height:40px;margin-right:5px;display:flex;align-items:center;gap:4px;padding-left:4px}.p i{width:4px;height:26px;border-radius:2px}.p fit-text{margin-top:-2px}
.on{background:#eaeaea;font-weight:600}.on i{background:#117865}`,
  `<div class="h">${tx("Páginas", 55)}${ic("dbl")}</div><div class="p"><i></i>${tx("Página 1", 51)}</div><div class="p on"><i></i>${tx("Página 2", 53)}</div>`);

define("tool-bar", lineCss + `:host{height:40px;background:#f4f4f4;color:#333;font-size:13.800px}.v{width:1px;height:28px;background:#555}`, () =>
  line(258, [icell(274, "file", 14), [290, 48, tx("Arquivo", 48)], icell(352, "chev", 9), icell(382, "exp", 17), [398, 53, tx("Exportar", 53)], icell(464, "chev", 9), icell(494, "share", 17), [510, 81, tx("Compartilhar", 81)], icell(615, "teams", 17), [631, 90, tx("Chat no Teams", 90)], icell(745, "bino", 15), [762, 128, tx("Explorar esses dados", 128)], icell(913, "bulb", 14), [930, 86, tx("Obter insights", 86)], icell(1041, "subs", 17), [1057, 111, tx("Assinar o relatório", 111)], icell(1192, "pencil", 17), [1209, 35, tx("Editar", 35)], icell(1270, "dots", 18),
    icell(2186, "copilotG", 18), [2202, 45, tx("Copilot", 45)], icell(2275, "undo"), icell(2311, "mark", 13), icell(2333, "chev", 9), icell(2363, "rect", 18), icell(2385, "chev", 9), [2407, 1, '<div class="v"></div>'], icell(2432, "refresh", 15), icell(2464, "comment"), icell(2496, "star", 17)]));

define("filter-pane", `:host{width:32px;flex:none;border-left:1px solid #aaa;background:#fff;display:flex;flex-direction:column;align-items:center;padding-top:14px;color:#222}
.f{margin-top:19px;margin-left:7px;display:flex}.t{writing-mode:vertical-rl;font-size:15px;font-weight:600;line-height:20px;margin:10px 0 0 2px;letter-spacing:-.35px}`,
  `${ic("dbl", 9)}<span class="f">${ic("filter", 9)}</span><div class="t">Filtros</div>`);

/* SVG text helper: x, baseline, text, width, attributes */
const st = (x, y, t, w, a = "") => `<text x="${x}" y="${y}" textLength="${w}" lengthAdjust="spacingAndGlyphs" ${a}>${t}</text>`;
const DIN = 'font-family="Roboto" font-size="18" fill="#252423"';
const svgCss = ":host{background:#fff}svg{display:block}text{font-family:'Open Sans','Noto Sans',sans-serif}";

define("decomposition-tree", svgCss, () => {
  const bar = (x, y, f, l, lw, v, vw, b = "") => `<rect x="${x}" y="${y}" width="154.500" height="12.300" fill="#ececec" ${b ? 'stroke="#ccc"' : ""}/><rect x="${x}" y="${y}" width="${f}" height="12.300" fill="#118dff"/>` + st(x + 6.2, y + 28.4, l, lw, `font-size="13.500" fill="#252423" ${b || ""}`) + st(x + 6.2, y + 45.2, v, vw, 'font-size="13.500" fill="#605e5c"');
  const B = 'font-weight="700"';
  const link = (x1, y1, x2, y2, c, w) => `<path d="M${x1} ${y1}C${(x1 + x2) / 2} ${y1} ${(x1 + x2) / 2} ${y2} ${x2} ${y2}" fill="none" stroke="${c}" stroke-width="${w}"/>`;
  const head = (x, t, w) => st(x, 492.5, t, w, 'style="font-family:Roboto" font-size="16.500" fill="#252423"') + `<rect x="${x}" y="497.300" width="154" height="2.500" fill="#118dff"/><path d="M${x + 144.5} 483.500l9.500 9.500m0-9.500l-9.500 9.500" stroke="#aaa" stroke-width="1.400"/>`;
  return `<svg width="658" height="552" viewBox="754 441 658 552">` +
    link(954, 732, 1013, 767, "#e8e8e8", 1) + [590, 661, 732, 803, 874].map(y => link(1167.5, 696, 1226.6, y, "#e8e8e8", 1)).join("") + link(954, 732, 1013, 696, "#118dff", 2) +
    head(1013.2, "Ano", 29) + head(1226.6, "Country", 60) + st(1013.2, 518, "2013", 30.5, 'font-size="13.500" fill="#605e5c"') +
    bar(799.3, 725.7, 154.5, "Soma de Profit", 99.5, "16.893.702,26", 86, B).replace('stroke="#ccc"', "") + bar(1013.2, 690, 46, "2013", 32, "3.878.464,51", 77.5, B) + bar(1013.2, 761, 154.5, "2014", 30.5, "13.015.237,75", 85.5) +
    bar(1226.6, 583.5, 111, "Canada", 47, "803.671,78", 67.5) + bar(1226.6, 654.6, 112, "France", 41, "811.332,17", 67.5) + bar(1226.6, 725.7, 154.5, "Germany", 57, "1.118.219,47", 77.5) + bar(1226.6, 796.8, 82, "Mexico", 45, "592.670,26", 67.5) + bar(1226.6, 868, 76.3, "United States of Ameri...", 151, "552.570,83", 67.5) + "</svg>";
});

define("radar-chart", svgCss, () => {
  const cx = 1604.1, cy = 565.7, p = (r, k) => { const a = Math.PI / 3 * k; return `${(cx + r * Math.sin(a)).toFixed(1)} ${(cy - r * Math.cos(a)).toFixed(1)}`; };
  const K = [0, 1, 2, 3, 4, 5];
  const pts = [65.3, 41, 38.2, 32, 29.3, 24.8];
  const A = 'style="font-family:Liberation Sans" font-size="13" fill="#111"';
  let s = `<svg width="350" height="314" viewBox="1427 378 350 314">` + st(1444.4, 407.7, "Soma de Profit por Product", 239, `style="font-family:Roboto" ${DIN}`) + st(1444.4, 438.5, "Axis", 24, A) + '<circle cx="1491.500" cy="434" r="6.200" fill="#118dff"/>' + st(1500, 438.5, "Soma de Profit", 83.5, A);
  s += '<g fill="none">';
  for (let i = 1; i <= 5; i++) s += `<path d="M${K.map(k => p(13.1 * i, k)).join("L")}Z" stroke="#ddd"/>`;
  K.forEach(k => s += `<path d="M${cx} ${cy}L${p(72.5, k)}" stroke="#777"/>`);
  K.forEach(k => { const d = k === 0 || k === 1 || k === 2 ? 8 : -8; s += `<path d="M${p(76, k)}L${p(100.5, k)}h${d}" stroke="#c4c4c4" stroke-width="1.300"/>`; });
  s += `</g><path d="M${K.map(k => p(pts[k], k)).join("L")}Z" fill="#118dff" fill-opacity=".4"/>`;
  K.forEach(k => { const [x, y] = p(pts[k], k).split(" "); s += `<circle cx="${x}" cy="${y}" r="6" fill="#118dff"/>`; });
  return s + st(1615, 470.3, "Paseo", 35.5, A) + st(1701.5, 520, "VTT", 23.5, A) + st(1701.5, 621, "Ama...", 36, A) + st(1569, 671, "Velo", 24.5, A) + st(1471.5, 621, "Mon...", 34.5, A) + st(1472.5, 520, "Carr...", 33.5, A) + "</svg>";
});

define("tree-map", `:host{background:#fff;padding:0 10.500px 11px 6.400px;display:flex;flex-direction:column;width:322.500px}
.h{height:29px;display:flex;align-items:center;font:18px Roboto;color:#252423;padding-bottom:3px}
.m{flex:1;display:flex;gap:1.500px;color:#fff;font-size:15px}.m div div,.g{padding:6px 0 0 5.500px;overflow:hidden}.g{width:198px;background:#118dff}
.r{flex:1;display:flex;flex-direction:column;gap:2px}.r>.s{background:#12239e;flex:1}.m .r>.b{display:flex;gap:1.500px;height:87.500px;padding:0}.b .k{width:70px;background:#e044a7}.b .u{flex:1;background:#6b007b}`,
  `<div class="h">${tx("Soma de Profit por Segment", 249)}</div><div class="m"><div class="g">${tx("Government", 86)}</div><div class="r"><div class="s">${tx("Small Busin...", 91)}</div><div class="b"><div class="k">${tx("Chann...", 57)}</div><div class="u"></div></div></div></div>`);

define("waterfall-chart", svgCss, () => {
  const G = 'font-size="14" fill="#605e5c"';
  let s = `<svg width="688" height="292" viewBox="1427 703 688 292">` + st(1444.4, 735.7, "Soma de Profit por Trimestre", 257, `style="font-family:Roboto" ${DIN}`);
  [[1451, "#1aab40", 1459, "Aumentar", 61.5], [1533.7, "#d64550", 1542, "Diminuir", 53.5], [1607.5, "#118dff", 1616, "Total", 29.5]].forEach(([c, f, x, t, w]) => s += `<circle cx="${c}" cy="762.800" r="6.200" fill="${f}"/>` + st(x, 768.3, t, w, G));
  [[789.8, "20 Mi", 1464.5, 35], [862.4, "10 Mi", 1464.5, 35], [935.4, "0 Mi", 1472, 27.5]].forEach(([y, t, x, w]) => s += `<path d="M1511 ${y}H2100" stroke="#c8c6c4" stroke-dasharray="1.500 4.500"/>` + st(x, y + 5.2, t, w, G));
  [[1553.5, 916, 935], [1659, 892.5, 915], [1764.5, 867, 892], [1870, 812, 866]].forEach(([x, a, b]) => s += `<rect x="${x}" y="${a}" width="81.700" height="${b - a}" fill="#1aab40"/>`);
  s += '<rect x="1975.200" y="812" width="81.700" height="123" fill="#118dff"/><path d="M1553.500 915.500H1740.500M1659 892H1846M1764.500 866.500H1951M1870 811.800H2057" stroke="#b3b0ad"/>';
  ["Trim 1", "Trim 2", "Trim 3", "Trim 4"].forEach((t, i) => s += st(1577 + 105.3 * i, 954, t, 37.8, G));
  return s + st(2003, 954, "Total", 29, G) + st(1764.5, 972.8, "Date Trimestre", 84.5, 'style="font-family:Roboto" font-size="12" font-weight="500" fill="#252423"') + `<g transform="translate(1455 904) rotate(-90)">${st(0, 0, "Soma de Profit", 83, 'style="font-family:Roboto" font-size="11.500" font-weight="500" fill="#252423"')}</g></svg>`;
});

define("report-page", `:host{width:1517.500px;height:854px;margin-left:353.500px;display:flex;border-radius:24px 0 38px 0;overflow:hidden;background:#d8d8d8;flex:none}
.l{width:135px;background:#0d1979;border:1px solid #0f62b8;border-radius:24px 0 0 0;display:flex;flex-direction:column;overflow:hidden;justify-content:space-between}.logo{background:#118dff;height:99px;border-bottom:1px solid #0f5db0}
.arrow{display:block;margin:0 0 21px 34px}svg{display:block}
.r{flex:1;display:flex;flex-direction:column}.hd{height:99.500px;background:#fff;padding:26px 0 0 30px;color:#252423;display:flex;flex-direction:column;border-bottom:1px solid #eee}
.hd .a{font-size:22px;font-weight:600;line-height:30px}.hd .b{font-size:13.500px;line-height:20px;margin-top:2px}
.ti{margin:41.500px 0 0 7.500px;width:573px;height:53px;border-bottom:2.500px solid #1068bf;padding-left:5px;font-size:36px;font-weight:700;line-height:47px;color:#252423}
.g{display:flex;gap:15px;padding:26px 0 0 7.500px}.c1{width:658px;display:flex;flex-direction:column;gap:14px}.sl{height:49px;background:#fff;display:flex;gap:7.500px;padding:11px 19px}
.sl div{flex:1;border:1px solid #1c262c;box-shadow:0 0 0 .5px #1c262c88;border-radius:6px;background:#bdd6ee;display:flex;justify-content:center;align-items:center;font-size:15.500px;color:#6a6a6a;height:27px}
.c2{display:flex;flex-direction:column;gap:11px}.row{display:flex;gap:13px;height:314px}.row tree-map{height:314.500px}`,
  `<div class="l"><div class="logo"><svg width="133" height="98" viewBox="612.500 159 133 98" fill="#fff"><circle cx="645.500" cy="207.800" r="17.200"/><path d="M662 185.500V209l-11-17q3-6 11-6.500z"/><circle cx="670.500" cy="191.800" r="6.600"/><path d="M664 225V203q2-5 6.500-5t6.500 7v8q-2 10-13 12z"/><circle cx="696" cy="208" r="17.200"/><circle cx="719.300" cy="218.800" r="6.800"/><path d="M727 226h14v3h-14z"/></svg></div><svg class="arrow" width="54" height="54" viewBox="0 0 54 54" fill="none" stroke="#fff" stroke-width="8"><path d="M50 27H8M29 4L6.500 27 29 50"/></svg></div>
  <div class="r"><div class="hd"><div class="a">${tx("Formação Power BI Analyst", 286)}</div><div class="b">${tx("Desafio de Projeto DIO", 143.5)}</div></div>
  <div class="ti">${tx("Report de Lucro detalhado", 475)}</div>
  <div class="g"><div class="c1"><div class="sl"><div>${tx("2013", 35)}</div><div>${tx("2014", 35)}</div></div><decomposition-tree></decomposition-tree></div>
  <div class="c2"><div class="row"><radar-chart></radar-chart><tree-map></tree-map></div><waterfall-chart></waterfall-chart></div></div></div>`);

define("status-bar", lineCss + `:host{height:23px;background:#f4f4f4;border-top:1px solid #ddd;color:#555;font-size:13px}.tr{width:100px;height:12px;display:flex;align-items:center;background:linear-gradient(#666,#666) 0 50%/100% 1px no-repeat}.tr i{width:1px;height:5px;background:#666;margin-left:50px}.tr b{width:4px;height:11px;background:#555;margin-left:1px}`, () =>
  line(72, [[2304, 5, tx("-", 5, "font-weight:700")], [2313, 100, '<div class="tr"><i></i><b></b></div>'], icell(2423, "plus", 8), [2441, 28, tx("119%", 28)], icell(2490, "fit", 15)]));

define("edge-sidebar", `:host{width:44px;display:flex;flex-direction:column;align-items:center;background:#f7f7f7;color:#333}
.i{height:40px;display:flex;align-items:center}hr{border:0;width:28px;height:1px;background:#bbb;margin:0}.sp{flex:1}`,
  `<div style="height:4px"></div>${["sSearch", "sTag", "sBox", "sChess", "sOffice", "sOutlook", "sSend"].map(n => `<div class="i">${ic(n, n === "sSearch" ? 17 : 18)}</div>`).join("")}<div style="height:12px"></div><hr><div style="height:11px"></div><div class="i">${ic("plus", 12)}</div><div class="sp"></div><hr><div style="height:3px"></div><div class="i">${ic("gear", 18)}</div><div style="height:2px"></div>`);

define("task-bar", lineCss + `:host{height:40px;background:linear-gradient(90deg,#223740,#20343f 45%,#1b2a45 80%,#1a2845);color:#fff;font-size:13px}
.s{width:288px;height:40px;background:#f2f2f2;border:1px solid #bbb;display:flex;align-items:center;color:#333;font-size:14px;overflow:hidden;padding-left:12px}.s .t{margin-left:10px;flex:1;display:flex}.s ui-icon{color:#111}
.w{width:48px;height:40px;display:flex;align-items:center;justify-content:center;border-bottom:0 solid #76b9ed}.w.on{background:#50626b;border-bottom-width:2px}
.u{border-bottom:2px solid #76b9ed;height:40px;display:flex;align-items:center;justify-content:center;width:100%}
.k{font-size:11.500px;line-height:17px;display:flex;flex-direction:column;align-items:center;width:100%}.pre{position:absolute;left:5px;top:14px;background:#ffc800;color:#111;font:700 6.500px/7px "Liberation Sans";padding:0 1px}`, () =>
  line(0, [icell(24, "win"), [48, 288, `<div class="s">${ic("tSearch", 17)}<span class="t">${tx("Pesquisar", 61)}</span>${ic("books", 77)}</div>`], icell(360, "tView", 17), [387, 48, `<div class="w on">${ic("edge", 25)}</div>`], icell(460, "explorer", 22), icell(508.5, "store", 23), [545, 34, ic("mail")], [587, 40, `<div class="u">${ic("opera", 25)}</div>`], icell(656, "vscode", 24), icell(704.5, "chrome", 25), icell(754, "brave", 21), icell(802, "eclipse", 24), [832, 40, `<div class="u">${ic("paint", 24)}</div>`],
    icell(2141, "moon", 23), [2162, 29, tx("25°C", 29)], [2200, 70, tx("Pred. limpo", 70)], icell(2301, "caret", 13), icell(2325, "net", 17), icell(2349, "vol", 17), [2366, 26, `<div class="k">${tx("POR", 23)}${tx("PTB2", 26)}</div>`], [2403, 58, `<div class="k">${tx("18:49", 27)}${tx("23/04/2024", 58)}</div>`], icell(2487, "note", 17), [2516, 22, `<div style="position:relative;display:flex">${ic("copilotP", 21)}<span class="pre">PRE</span></div>`], [2555, 1, '<div style="width:1px;height:40px;background:#68748a"></div>']]));

define("desktop-shell", `:host{display:flex;flex-direction:column;width:2560px;height:1080px;background:#f7f7f7}
.mid{display:flex;height:971px;flex:none}.frame{width:2512px;margin-left:4px;height:967px;border:1px solid #dcdcdc;border-top-color:#e6e6e6;border-radius:8px;overflow:hidden;display:flex;flex-direction:column;box-shadow:0 1px 3px #0002}
.body{display:flex;flex:1}.right{flex:1;display:flex;flex-direction:column;min-width:0}.work{display:flex;height:894px;flex:none}.main{flex:1;display:flex;flex-direction:column;background:#fff}.cv{display:flex;flex:1}.sp{flex:1}`,
  `<tab-strip></tab-strip><address-bar></address-bar><div class="mid"><div class="frame"><app-header></app-header><div class="body"><side-nav></side-nav><div class="right"><div class="work"><pages-pane></pages-pane><div class="main"><tool-bar></tool-bar><div class="cv"><report-page></report-page><div class="sp"></div><filter-pane></filter-pane></div></div></div><status-bar></status-bar></div></div></div><edge-sidebar></edge-sidebar></div><task-bar></task-bar>`);
</script>
</body>
</html>
